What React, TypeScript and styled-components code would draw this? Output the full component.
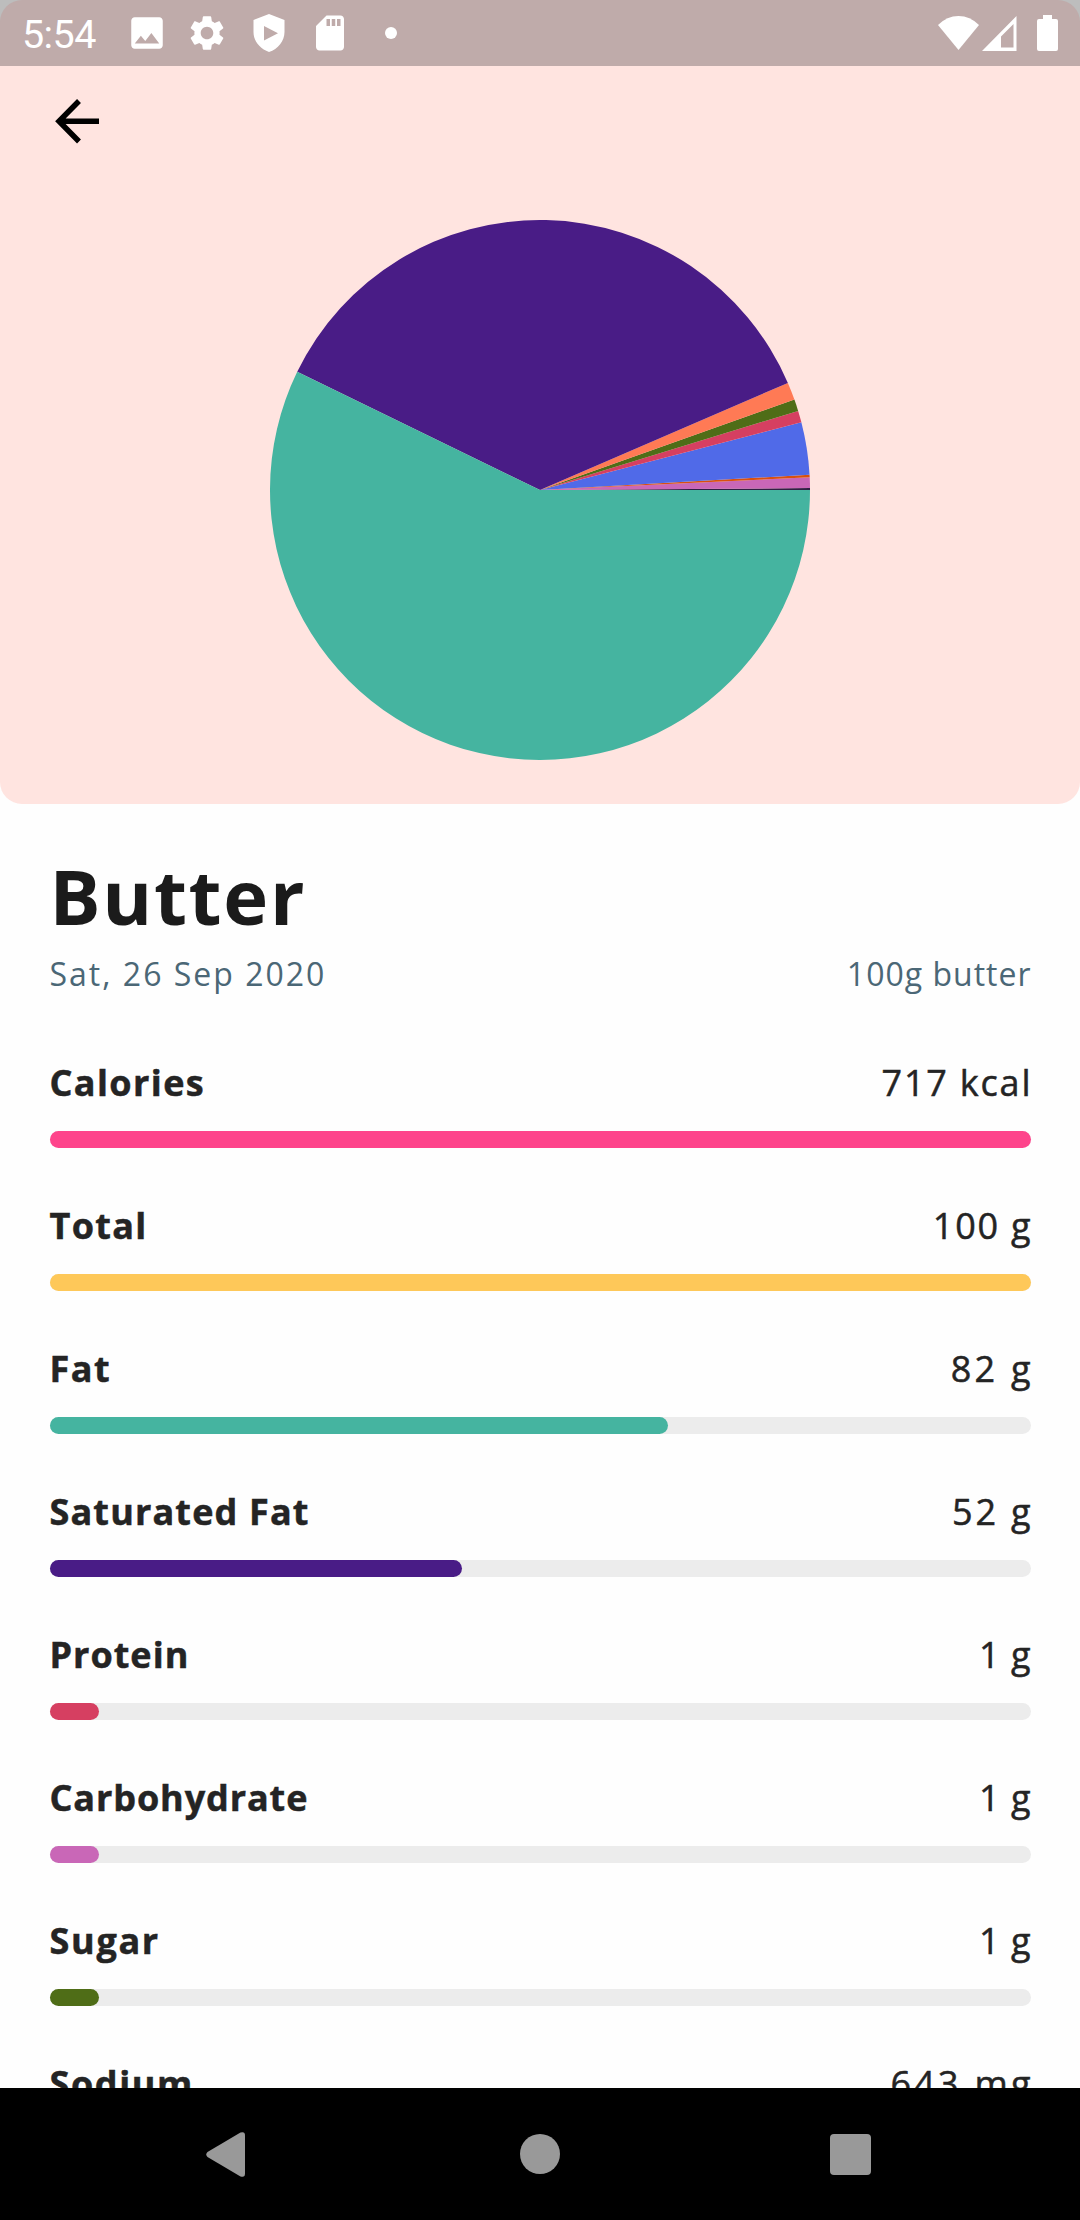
import React from 'react';
import styled, { createGlobalStyle } from 'styled-components';

const GlobalStyle = createGlobalStyle`
  *, *::before, *::after { box-sizing: border-box; }
  html, body { margin: 0; padding: 0; background: #fff; }
  body { font-family: "Open Sans", "Noto Sans", sans-serif; overflow: hidden; }
`;

const Screen = styled.div`
  width: 1080px;
  height: 2220px;
  display: flex;
  flex-direction: column;
  overflow: hidden;
  background: #fefefe;
`;

const StatusCorner = styled.div`
  background: #bdbdbd;
  flex: none;
`;

const StatusBar = styled.header`
  height: 66px;
  padding: 0 22px 0 22px;
  display: flex;
  align-items: center;
  justify-content: space-between;
  border-radius: 22px 22px 0 0;
  background: #bfabaa;
  color: #fff;
`;

const StatusGroup = styled.div`
  display: flex;
  align-items: center;
  height: 66px;
`;

const Clock = styled.span`
  width: 103.5px;
  font: 400 39.5px/66px Roboto, sans-serif;
  letter-spacing: -0.6px;
  padding-top: 3px;
`;

const StatusIcon = styled.svg<{ $gap?: number }>`
  display: block;
  flex: none;
  margin-right: ${p => p.$gap ?? 0}px;
`;

const Hero = styled.section`
  flex: none;
  height: 738px;
  padding: 30px 49px 0;
  background: #ffe4e0;
  border-radius: 0 0 22px 22px;
  display: flex;
  flex-direction: column;
`;

const BackButton = styled.button`
  width: 55px;
  height: 50px;
  padding: 0;
  border: 0;
  background: none;
  display: flex;
`;

const Chart = styled.svg`
  display: block;
  align-self: center;
  margin-top: 73.6px;
`;

const Details = styled.main`
  flex: 1;
  min-height: 0;
  overflow: hidden;
  padding: 39.5px 49.5px 0;
`;

const Title = styled.h1<{ $spacing: number }>`
  margin: 0;
  font-size: 76px;
  line-height: 104px;
  font-weight: 700;
  letter-spacing: ${p => p.$spacing}px;
  color: #1b1b1b;
`;

const Meta = styled.div`
  display: flex;
  justify-content: space-between;
  height: 50px;
  font-size: 32px;
  line-height: 52px;
  color: #4b6776;
`;

const Spaced = styled.span<{ $spacing: number }>`
  letter-spacing: ${p => p.$spacing}px;
  margin-right: ${p => -p.$spacing}px;
  white-space: nowrap;
`;

const Nutrients = styled.ul`
  list-style: none;
  margin: 0;
  padding: 53.5px 0 0;
`;

const Nutrient = styled.li`
  height: 143px;
`;

const NutrientHead = styled.div`
  display: flex;
  justify-content: space-between;
  height: 80px;
  line-height: 64px;
  font-size: 36px;
  color: #242424;
`;

const Label = styled(Spaced)`
  font-weight: 700;
  -webkit-text-stroke: 0.5px #242424;
`;

const Amount = styled(Spaced)`
  font-weight: 500;
  -webkit-text-stroke: 0.5px #242424;
`;

const Track = styled.div`
  height: 17px;
  border-radius: 9px;
  background: #ececec;
`;

const Fill = styled.div<{ $color: string }>`
  height: 17px;
  border-radius: 9px;
  background: ${p => p.$color};
`;

const NavBar = styled.nav`
  flex: none;
  height: 132px;
  background: #000;
  display: flex;
  align-items: center;
  padding-left: 206px;
`;

const NavIcon = styled.svg<{ $gap?: number }>`
  display: block;
  flex: none;
  margin-right: ${p => p.$gap ?? 0}px;
`;

const rows = [
  { label: 'Calories', ls: 1.4, amount: '717 kcal', as: 1.8, pct: 100, color: '#fe448b' },
  { label: 'Total', ls: 1.3, amount: '100 g', as: 1.75, pct: 100, color: '#fec859' },
  { label: 'Fat', ls: 1.5, amount: '82 g', as: 3.2, pct: 63, color: '#45b4a0' },
  { label: 'Saturated Fat', ls: 1.15, amount: '52 g', as: 2.8, pct: 42, color: '#491c86' },
  { label: 'Protein', ls: 1, amount: '1 g', as: 1, pct: 5, color: '#d63f61' },
  { label: 'Carbohydrate', ls: 0.9, amount: '1 g', as: 1, pct: 5, color: '#c967b7' },
  { label: 'Sugar', ls: 1.7, amount: '1 g', as: 1, pct: 5, color: '#4f6d17' },
  { label: 'Sodium', ls: 1.6, amount: '643 mg', as: 3.2, pct: 70, color: '#506ae8' },
];

/* Slices run counter-clockwise; angles are in degrees above the positive x axis. */
const slices = [
  { from: 0, to: 0.4, color: '#302044' },
  { from: 0.4, to: 2.7, color: '#c967b7' },
  { from: 2.7, to: 3.25, color: '#d9500f' },
  { from: 3.25, to: 14.54, color: '#506ae8' },
  { from: 14.54, to: 17.04, color: '#d63f61' },
  { from: 17.04, to: 19.57, color: '#4f6d17' },
  { from: 19.57, to: 23.36, color: '#ff7a55' },
  { from: 23.36, to: 154.05, color: '#491c86' },
  { from: 154.05, to: 360, color: '#45b4a0' },
];

const R = 270;
const at = (deg: number) => {
  const a = (deg * Math.PI) / 180;
  return `${R + R * Math.cos(a)} ${R - R * Math.sin(a)}`;
};

const Pie = () => (
  <Chart width={540} height={540} viewBox="0 0 540 540">
    {slices.map(s => (
      <path
        key={s.color}
        fill={s.color}
        d={`M${R} ${R}L${at(s.from)}A${R} ${R} 0 ${s.to - s.from > 180 ? 1 : 0} 0 ${at(s.to)}Z`}
      />
    ))}
  </Chart>
);

export default function App() {
  return (
    <>
      <GlobalStyle />
      <Screen>
        <StatusCorner>
          <StatusBar>
            <StatusGroup>
              <Clock>5:54</Clock>
              <StatusIcon width={42} height={42} viewBox="0 0 24 24" fill="#fff" $gap={18.5}>
                <path d="M21 19V5c0-1.1-.9-2-2-2H5c-1.1 0-2 .9-2 2v14c0 1.1.9 2 2 2h14c1.1 0 2-.9 2-2zM8.500 13.500l2.500 3.010L14.500 12l4.500 6H5l3.500-4.500z" />
              </StatusIcon>
              <StatusIcon width={42} height={42} viewBox="0 0 24 24" fill="#fff" $gap={19.5}>
                <path d="M19.14 12.94c.04-.3.06-.61.06-.94 0-.32-.02-.64-.07-.94l2.03-1.58c.18-.14.23-.41.12-.61l-1.92-3.32c-.12-.22-.37-.29-.59-.22l-2.39.96c-.5-.38-1.030-.7-1.620-.94l-.36-2.540c-.04-.24-.24-.41-.48-.41h-3.840c-.24 0-.43.17-.47.41l-.36 2.540c-.59.24-1.130.57-1.620.94l-2.390-.96c-.22-.08-.47 0-.59.22L2.740 8.870c-.12.21-.08.47.12.61l2.030 1.580c-.05.3-.09.63-.09.94s.02.64.07.94l-2.030 1.580c-.18.14-.23.41-.12.61l1.920 3.320c.12.22.37.29.59.22l2.390-.96c.5.38 1.030.7 1.620.94l.36 2.540c.05.24.24.41.48.41h3.840c.24 0 .44-.17.47-.41l.36-2.540c.59-.24 1.130-.56 1.620-.94l2.390.96c.22.08.47 0 .59-.22l1.920-3.320c.12-.22.07-.47-.12-.61l-2.010-1.580zM12 15.600c-1.980 0-3.600-1.620-3.600-3.600s1.620-3.600 3.600-3.600 3.600 1.620 3.600 3.600-1.620 3.600-3.600 3.600z" />
              </StatusIcon>
              <StatusIcon width={42} height={42} viewBox="0 0 42 42" fill="#fff" $gap={19}>
                <path fillRule="evenodd" d="M21 2L36.500 8V20C36.500 29 30 37 21 40C12 37 5.500 29 5.500 20V8ZM16 14V28.500L30 21.200Z" />
              </StatusIcon>
              <StatusIcon width={42} height={42} viewBox="0 0 24 24" fill="#fff" $gap={34}>
                <path d="M18 2h-8L4.020 8 4 20c0 1.100.9 2 2 2h12c1.100 0 2-.9 2-2V4c0-1.100-.9-2-2-2zm-6 6h-2V4h2v4zm3 0h-2V4h2v4zm3 0h-2V4h2v4z" />
              </StatusIcon>
              <StatusIcon width={12} height={12} viewBox="0 0 12 12" fill="#fff">
                <circle cx="6" cy="6" r="6" />
              </StatusIcon>
            </StatusGroup>
            <StatusGroup>
              <StatusIcon width={41} height={35} viewBox="0 0 41 35" fill="#fff" $gap={3}>
                <path d="M0 9Q9 0 20.500 0T41 9L20.500 34Z" />
              </StatusIcon>
              <StatusIcon width={35} height={35} viewBox="0 0 35 35" fill="#fff" $gap={20}>
                <path fillRule="evenodd" d="M34.500 0V35H0ZM31.500 8L19 20.500V31.500H31.500Z" />
              </StatusIcon>
              <StatusIcon width={21} height={36} viewBox="0 0 21 36" fill="#fff">
                <path d="M6 0h9v4h4q2 0 2 2v28q0 2-2 2H2q-2 0-2-2V6q0-2 2-2h4z" />
              </StatusIcon>
            </StatusGroup>
          </StatusBar>
        </StatusCorner>
        <Hero>
          <BackButton aria-label="Back">
            <svg width="55" height="50" viewBox="0 0 55 50">
              <path d="M50 25.300H13M30 5L10 25.300L30 45.500" fill="none" stroke="#000" strokeWidth="5.500" />
            </svg>
          </BackButton>
          <Pie />
        </Hero>
        <Details>
          <Title $spacing={1.7}>Butter</Title>
          <Meta>
            <Spaced $spacing={2}>Sat, 26 Sep 2020</Spaced>
            <Spaced $spacing={1}>100g butter</Spaced>
          </Meta>
          <Nutrients>
            {rows.map(r => (
              <Nutrient key={r.label}>
                <NutrientHead>
                  <Label $spacing={r.ls}>{r.label}</Label>
                  <Amount $spacing={r.as}>{r.amount}</Amount>
                </NutrientHead>
                <Track>
                  <Fill $color={r.color} style={{ width: `${r.pct}%` }} />
                </Track>
              </Nutrient>
            ))}
          </Nutrients>
        </Details>
        <NavBar>
          <NavIcon width={39} height={45} viewBox="0 0 39 45" fill="#999" $gap={275}>
            <path d="M1.500 20L34.500 0.600Q39 -1 39 3.500V41.500Q39 46 34.500 44.400L1.500 25Q-1 22.500 1.500 20Z" />
          </NavIcon>
          <NavIcon width={40} height={40} viewBox="0 0 40 40" fill="#999" $gap={270}>
            <circle cx="20" cy="20" r="20" />
          </NavIcon>
          <NavIcon width={41} height={41} viewBox="0 0 41 41" fill="#999">
            <rect width="41" height="41" rx="4" />
          </NavIcon>
        </NavBar>
      </Screen>
    </>
  );
}
